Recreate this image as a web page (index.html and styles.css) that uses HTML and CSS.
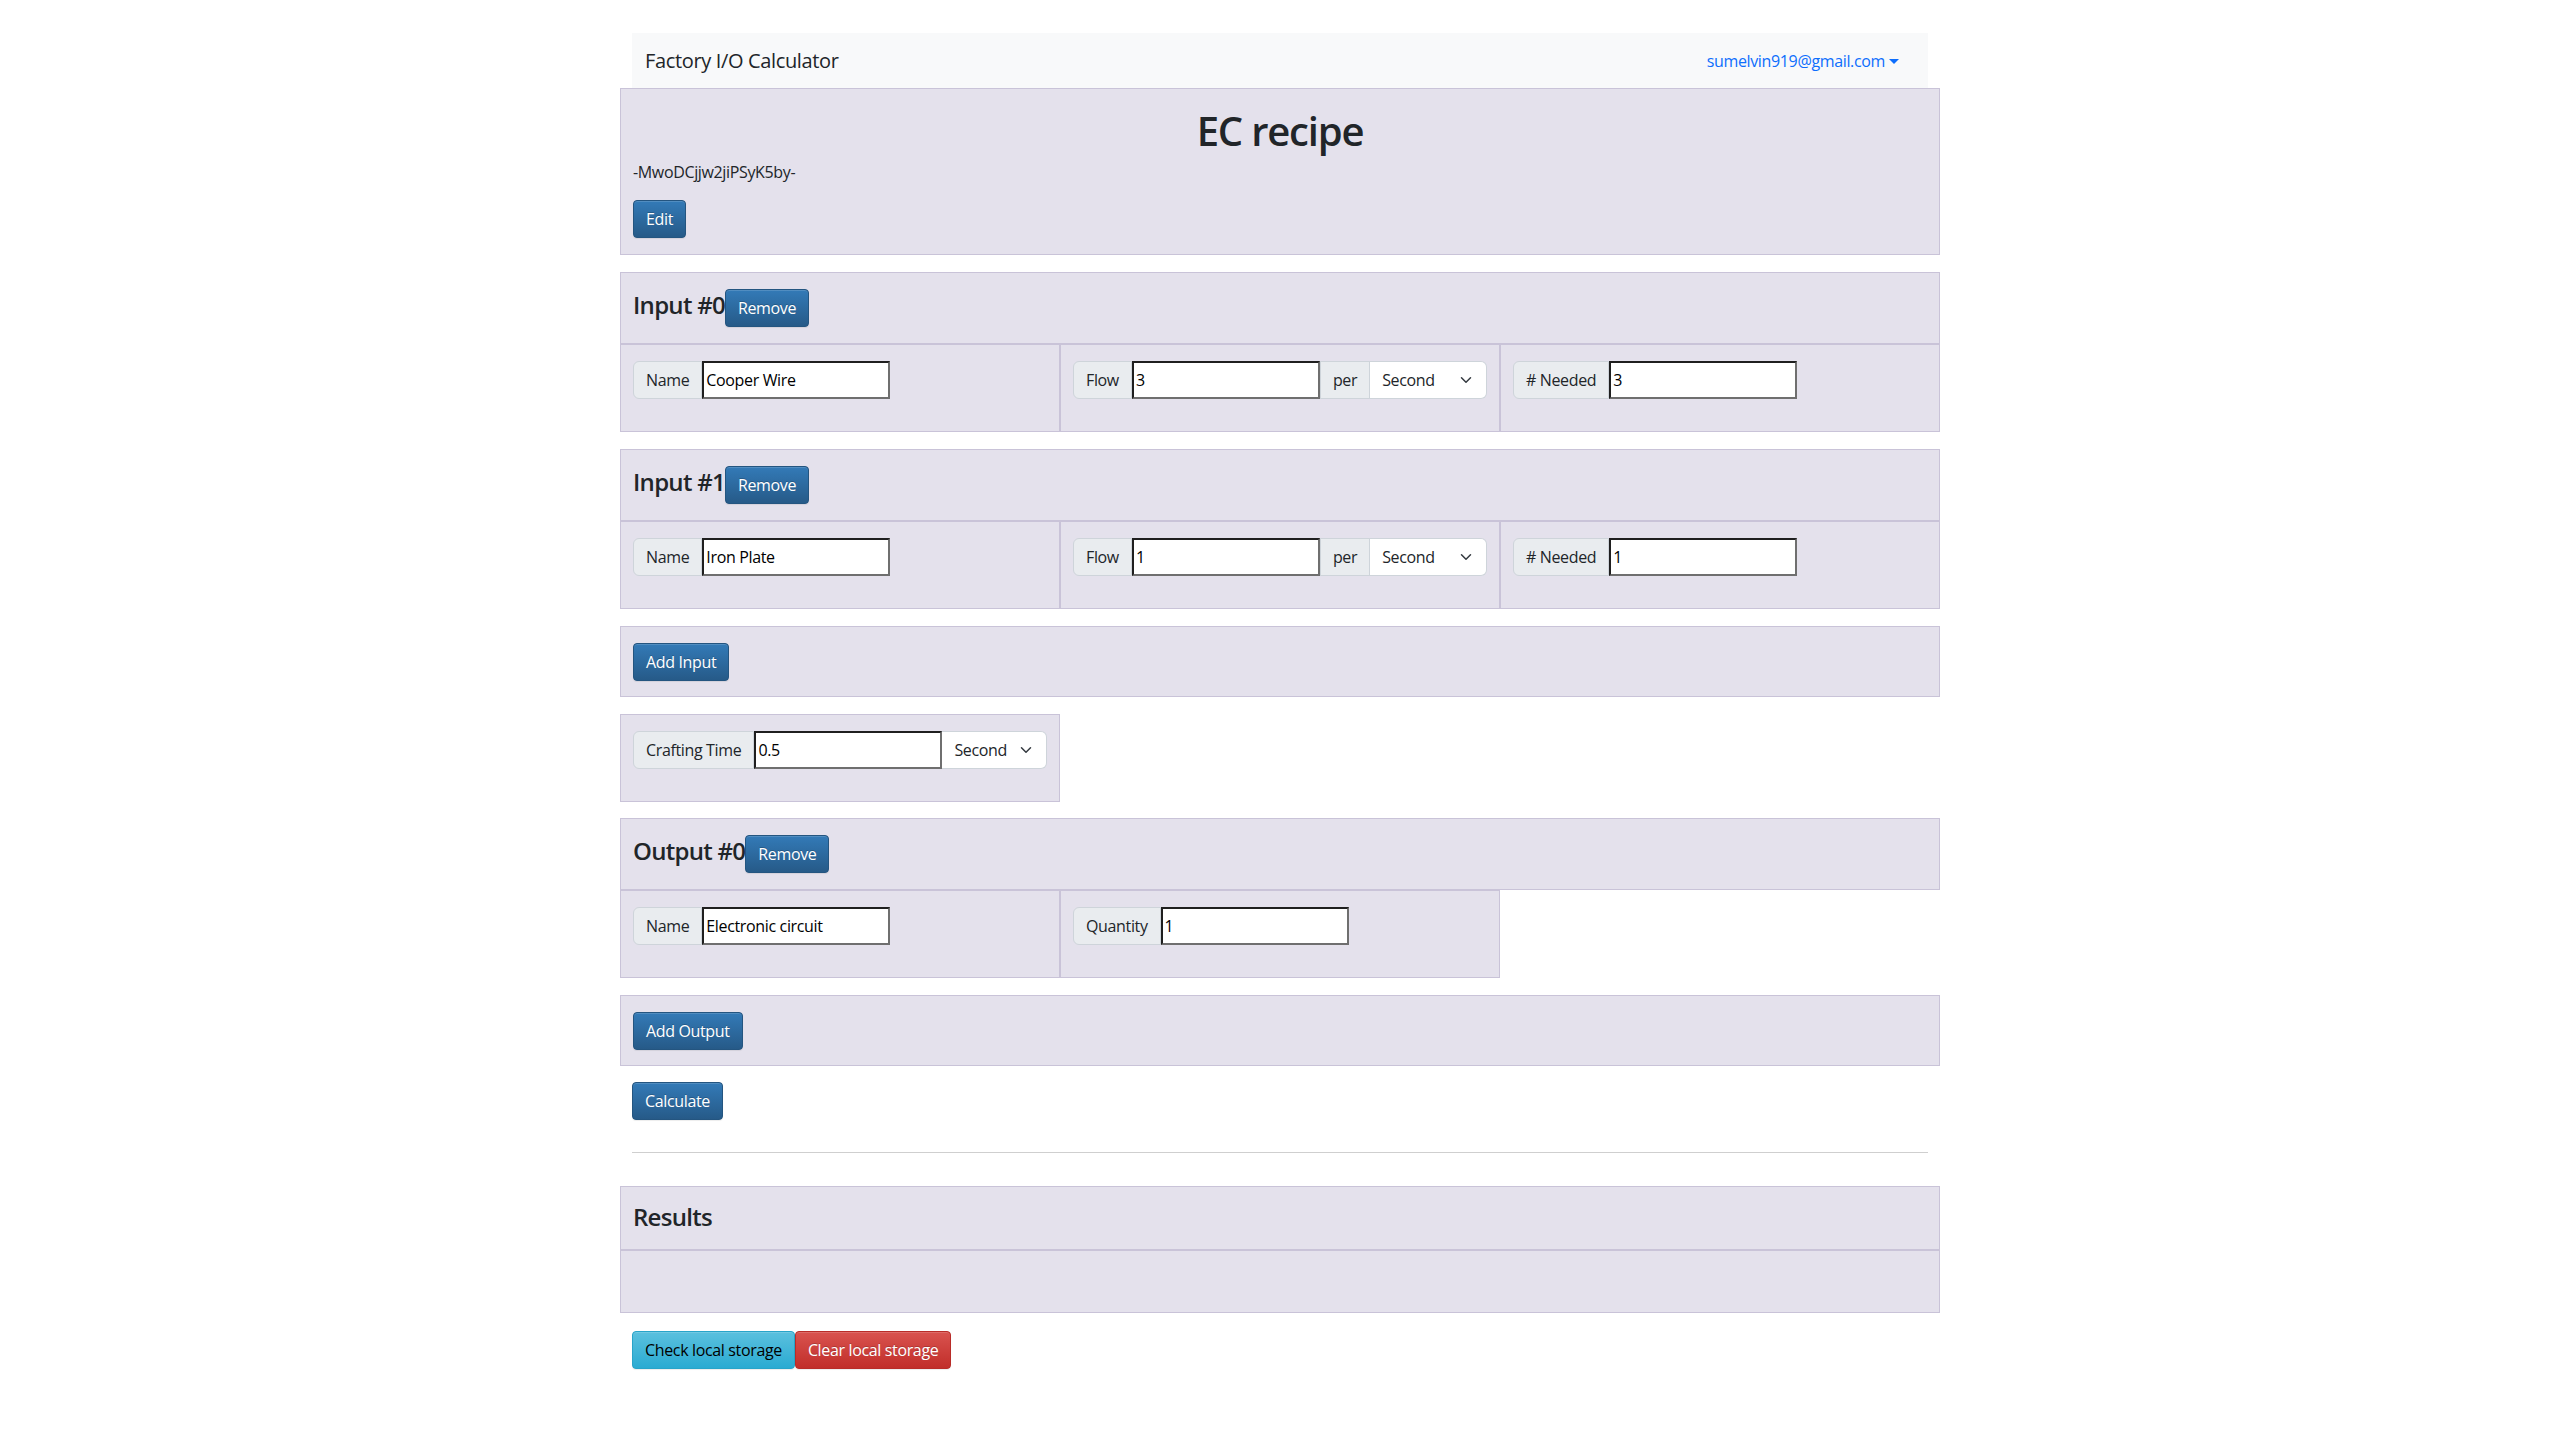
FILE: index.html
```html
<!DOCTYPE html>
<html lang="en">
<head>
<meta charset="utf-8">
<title>Factory I/O Calculator</title>
<link rel="stylesheet" href="styles.css">
</head>
<body>
<div class="page">
  <nav class="navbar">
    <span class="brand">Factory I/O Calculator</span>
    <a class="user" href="#">sumelvin919@gmail.com<span class="caret"></span></a>
  </nav>

  <section class="panel recipe">
    <h1 class="title">EC recipe</h1>
    <p class="rid">-MwoDCjjw2jiPSyK5by-</p>
    <button class="btn btn-primary">Edit</button>
  </section>

  <section class="block">
    <div class="panel block-head"><h4 class="head">Input #0</h4><button class="btn btn-primary">Remove</button></div>
    <div class="cols">
      <div class="col">
        <div class="igroup"><span class="addon first">Name</span><input class="field" type="text" value="Cooper Wire"></div>
      </div>
      <div class="col">
        <div class="igroup"><span class="addon first">Flow</span><input class="field" type="text" value="3"><span class="addon">per</span><span class="select last w-118">Second<svg class="chev" viewBox="0 0 16 16" width="16" height="12"><path d="M2 5l6 6 6-6" fill="none" stroke="#343a40" stroke-width="2" stroke-linecap="round" stroke-linejoin="round"/></svg></span></div>
      </div>
      <div class="col">
        <div class="igroup"><span class="addon first"># Needed</span><input class="field" type="text" value="3"></div>
      </div>
    </div>
  </section>

  <section class="block">
    <div class="panel block-head"><h4 class="head">Input #1</h4><button class="btn btn-primary">Remove</button></div>
    <div class="cols">
      <div class="col">
        <div class="igroup"><span class="addon first">Name</span><input class="field" type="text" value="Iron Plate"></div>
      </div>
      <div class="col">
        <div class="igroup"><span class="addon first">Flow</span><input class="field" type="text" value="1"><span class="addon">per</span><span class="select last w-118">Second<svg class="chev" viewBox="0 0 16 16" width="16" height="12"><path d="M2 5l6 6 6-6" fill="none" stroke="#343a40" stroke-width="2" stroke-linecap="round" stroke-linejoin="round"/></svg></span></div>
      </div>
      <div class="col">
        <div class="igroup"><span class="addon first"># Needed</span><input class="field" type="text" value="1"></div>
      </div>
    </div>
  </section>

  <section class="panel action">
    <button class="btn btn-primary">Add Input</button>
  </section>

  <section class="block block-tight">
    <div class="cols">
      <div class="col">
        <div class="igroup"><span class="addon first">Crafting Time</span><input class="field" type="text" value="0.5"><span class="select last w-106">Second<svg class="chev" viewBox="0 0 16 16" width="16" height="12"><path d="M2 5l6 6 6-6" fill="none" stroke="#343a40" stroke-width="2" stroke-linecap="round" stroke-linejoin="round"/></svg></span></div>
      </div>
    </div>
  </section>

  <section class="block">
    <div class="panel block-head"><h4 class="head">Output #0</h4><button class="btn btn-primary">Remove</button></div>
    <div class="cols">
      <div class="col">
        <div class="igroup"><span class="addon first">Name</span><input class="field" type="text" value="Electronic circuit"></div>
      </div>
      <div class="col">
        <div class="igroup"><span class="addon first">Quantity</span><input class="field" type="text" value="1"></div>
      </div>
    </div>
  </section>

  <section class="panel action action-tight">
    <button class="btn btn-primary">Add Output</button>
  </section>

  <div class="calc-row">
    <button class="btn btn-primary">Calculate</button>
  </div>

  <hr class="sep">

  <section class="results">
    <div class="panel results-head"><h4 class="head">Results</h4></div>
    <div class="panel results-body"></div>
  </section>

  <div class="storage-row">
    <button class="btn btn-info">Check local storage</button><button class="btn btn-danger">Clear local storage</button>
  </div>
</div>
</body>
</html>
```

FILE: styles.css
```css
* {
  box-sizing: border-box;
}

body {
  margin: 0;
  font-family: "Segoe UI", "Open Sans", "Noto Sans", "Liberation Sans", sans-serif;
  font-size: 16px;
  line-height: 1.5;
  letter-spacing: -0.022em;
  color: #212529;
  background: #ffffff;
}

.page {
  width: 1320px;
  margin: 33px auto 0;
  padding-bottom: 40px;
}

/* navbar */
.navbar {
  margin: 0 12px;
  height: 55px;
  background: #f8f9fa;
  display: flex;
  align-items: center;
  justify-content: space-between;
  padding: 0 29px 0 13px;
}

.brand {
  font-size: 20px;
  line-height: 30px;
  color: #212529;
}

.user {
  color: #0d6efd;
  text-decoration: none;
  font-size: 16px;
}

.caret {
  display: inline-block;
  margin-left: 4px;
  vertical-align: 3px;
  border-top: 5px solid #0d6efd;
  border-left: 5px solid transparent;
  border-right: 5px solid transparent;
}

/* panels */
.panel {
  background: #e4e1ec;
  border: 1px solid #c9c3d8;
}

.recipe {
  padding: 18px 12px 16px;
  margin-bottom: 17px;
}

.title {
  margin: 0 0 6px;
  text-align: center;
  font-size: 40px;
  font-weight: 600;
  line-height: 1.2;
  letter-spacing: -0.03em;
}

.rid {
  margin: 0 0 17px;
  font-size: 16px;
  line-height: 22px;
}

.block {
  margin-bottom: 17px;
}

.block-tight {
  margin-bottom: 16px;
}

.block-head {
  display: flex;
  align-items: baseline;
  padding: 16px 12px 16px;
}

.head {
  margin: 0;
  font-size: 24px;
  font-weight: 600;
  line-height: 1.2;
  letter-spacing: -0.03em;
}

.cols {
  display: grid;
  grid-template-columns: repeat(3, 440px);
}

.col {
  background: #e4e1ec;
  border: 1px solid #c9c3d8;
  padding: 16px 12px 32px;
}

/* input groups */
.igroup {
  display: flex;
  height: 38px;
}

.addon {
  display: flex;
  align-items: center;
  padding: 0 12px;
  background: #e9ecef;
  border: 1px solid #ced4da;
  color: #212529;
  white-space: nowrap;
}

.addon.first {
  border-radius: 6px 0 0 6px;
}

.field {
  width: 188px;
  height: 38px;
  margin: 0;
  padding: 1px 2px;
  font: inherit;
  letter-spacing: -0.022em;
  color: #000;
  background: #fff;
  border-style: solid;
  border-width: 2px;
  border-color: #1f1f1f #6f6f6f #6f6f6f #1f1f1f;
  border-radius: 0;
  outline: none;
}

.select {
  display: flex;
  align-items: center;
  justify-content: space-between;
  padding: 0 12px 0 12px;
  background: #fff;
  border: 1px solid #ced4da;
  border-left: 0;
  color: #212529;
}

.select.last {
  border-radius: 0 6px 6px 0;
}

.w-118 {
  width: 118px;
}

.w-106 {
  width: 106px;
}

.chev {
  flex: none;
}

/* action panels */
.action {
  padding: 16px 12px 15px;
  margin-bottom: 17px;
}

.action-tight {
  margin-bottom: 16px;
}

.calc-row {
  padding: 0 12px;
}

.sep {
  margin: 32px 12px 33px;
  border: 0;
  border-top: 1px solid #cfcfcf;
  height: 0;
}

.results-head {
  padding: 16px 12px 17px;
}

.results-body {
  height: 63px;
}

.storage-row {
  display: flex;
  padding: 0 12px;
  margin-top: 18px;
}

/* buttons */
.btn {
  font: inherit;
  font-size: 16px;
  line-height: 24px;
  letter-spacing: -0.022em;
  padding: 6px 12px;
  border: 1px solid transparent;
  border-radius: 4px;
  color: #fff;
  cursor: pointer;
  text-shadow: 0 -1px 0 rgba(0, 0, 0, 0.2);
  box-shadow: inset 0 1px 0 rgba(255, 255, 255, 0.15), 0 1px 1px rgba(0, 0, 0, 0.075);
}

.btn-primary {
  background-color: #265a88;
  background-image: linear-gradient(#337ab7, #265a88);
  border-color: #245580;
}

.btn-info {
  background-color: #2aabd2;
  background-image: linear-gradient(#5bc0de, #2aabd2);
  border-color: #28a4c9;
  color: #000;
  text-shadow: none;
}

.btn-danger {
  background-color: #c12e2a;
  background-image: linear-gradient(#d9534f, #c12e2a);
  border-color: #b92c28;
}
```
